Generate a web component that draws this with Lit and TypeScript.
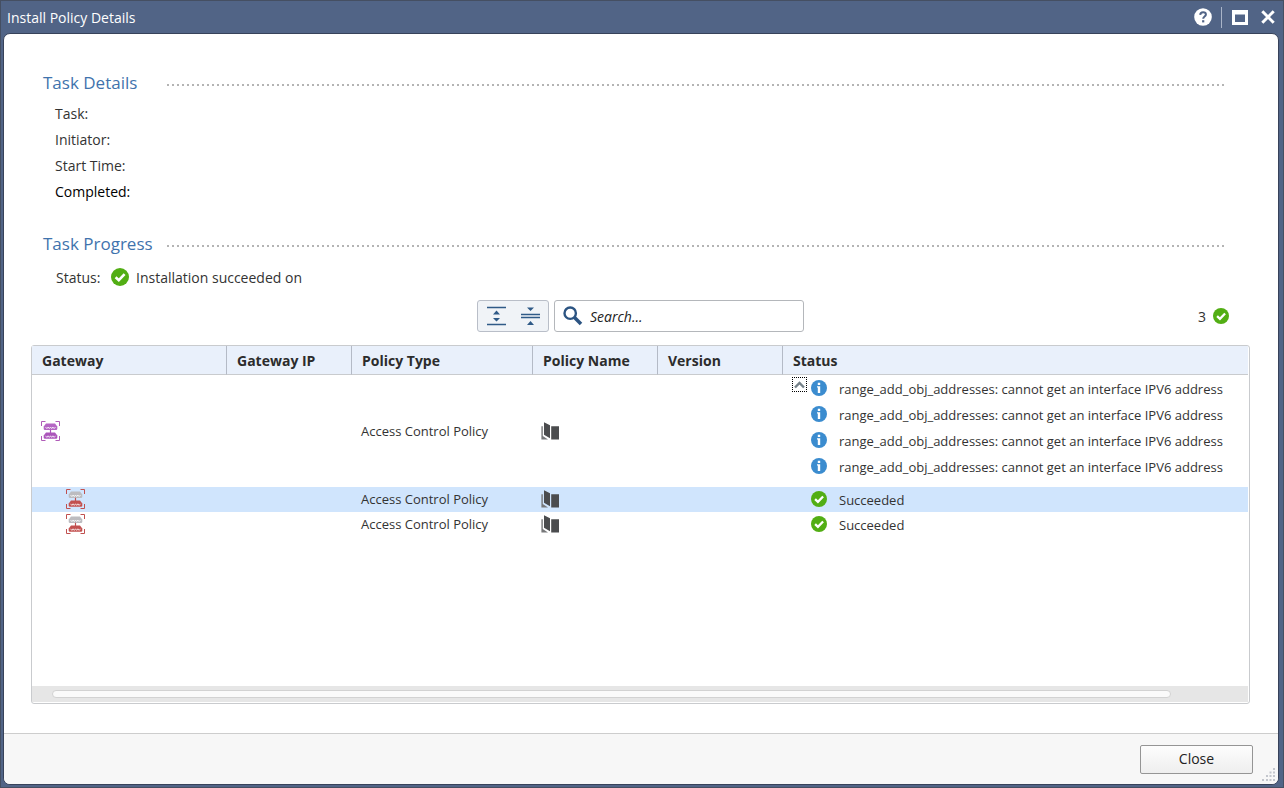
import { LitElement, html, svg, css, nothing } from "lit";
import { customElement, state } from "lit/decorators.js";

type Level = "info" | "ok";

interface PolicyRow {
  kind: "cluster" | "member";
  policyType: string;
  level: Level;
  messages: string[];
  selected?: boolean;
}

const IPV6_NOTE = "range_add_obj_addresses: cannot get an interface IPV6 address";

const ROWS: PolicyRow[] = [
  {
    kind: "cluster",
    policyType: "Access Control Policy",
    level: "info",
    messages: [IPV6_NOTE, IPV6_NOTE, IPV6_NOTE, IPV6_NOTE],
  },
  { kind: "member", policyType: "Access Control Policy", level: "ok", messages: ["Succeeded"], selected: true },
  { kind: "member", policyType: "Access Control Policy", level: "ok", messages: ["Succeeded"] },
];

const okIcon = (size: number) => html`
  <svg class="icon" width=${size} height=${size} viewBox="0 0 18 18" aria-hidden="true">
    <circle cx="9" cy="9" r="9" fill="#52ae14" />
    <path d="M4.6 9.2 7.8 12.2 13.6 6.2" fill="none" stroke="#fff" stroke-width="2.6" />
  </svg>
`;

const infoIcon = html`
  <svg class="icon" width="16" height="16" viewBox="0 0 16 16" aria-hidden="true">
    <circle cx="8" cy="8" r="8" fill="#3b8ccf" />
    <path d="M6.8 2.7h2.4v2.2H6.8zM6 6.3h3.2v6.8H6.8V7.6H6z" fill="#fff" />
  </svg>
`;

// One appliance of the cluster glyph: a tapered box with a zigzag of ports.
const device = (y: number, color: string) => svg`
  <path d=${`M5 ${y}H14L16.3 ${y + 3}V${y + 5.2}Q16.3 ${y + 6.4} 15 ${y + 6.4}H4Q2.7 ${y + 6.4} 2.7 ${y + 5.2}V${y + 3}Z`} fill=${color} />
  <path d=${`M4.5 ${y + 3.4}l1.4 1.6 1.2-1.6 1.2 1.6 1.2-1.6 1.2 1.6 1.2-1.6 1.2 1.6 1.4-1.6`} fill="none" stroke="#fff" stroke-width="0.8" />
`;

const gatewayIcon = (frame: string, top: string, bottom: string) => html`
  <svg class="icon" width="19" height="20" viewBox="0 0 19 20" aria-hidden="true">
    <path d="M.5 5V.5H4.5M14.500 .5H18.500V5M18.500 15V19.500H14.500M4.500 19.500H.5V15" fill="none" stroke=${frame} stroke-width="1" />
    ${device(2.6, top)}
    <path d="M9.5 8.800V12" stroke=${bottom} stroke-width="1.2" />
    ${device(11.4, bottom)}
  </svg>
`;

const policyIcon = html`
  <svg class="icon" width="18" height="18" viewBox="0 0 18 18" aria-hidden="true">
    <path d="M3 .3 9 3.3V16.2L3 12.8zM10.2 4.3H18V17.6h-7.800z" fill="#4b4c4e" />
    <path d="M.4 4.300H1.800V14L7 17.500H.4z" fill="#77787a" />
  </svg>
`;

@customElement("section-heading")
export class SectionHeading extends LitElement {
  static styles = css`
    :host {
      display: flex;
      align-items: center;
      height: 24px;
    }
    .title {
      flex: 0 0 124px;
      margin: 0;
      font-size: 17px;
      font-weight: 400;
      line-height: 24px;
      color: #3f73ad;
      white-space: nowrap;
    }
    .rule {
      flex: 1;
      height: 2px;
      margin-top: 4px;
      background: repeating-linear-gradient(to right, #b4b4b4 0 2px, transparent 2px 5px);
    }
  `;

  render() {
    return html`<h2 class="title"><slot></slot></h2>
      <div class="rule"></div>`;
  }
}

@customElement("app-root")
export class AppRoot extends LitElement {
  static styles = css`
    :host {
      display: block;
      height: 100vh;
      font-family: "Open Sans", "Noto Sans", sans-serif;
      font-size: 14px;
      color: #333;
    }
    * {
      box-sizing: border-box;
    }
    .icon {
      display: block;
      flex: none;
    }
    .window {
      display: flex;
      flex-direction: column;
      height: 100%;
      border: 1px solid #454f62;
      background: #516486;
      padding: 0 4px 2px 2px;
    }
    .titlebar {
      display: flex;
      align-items: center;
      flex: 0 0 32px;
      padding-left: 4px;
      color: #fff;
    }
    .caption {
      flex: 1;
      margin: 0;
      padding-top: 2px;
      font-size: 14px;
      font-weight: 400;
      line-height: 20px;
    }
    .tool {
      display: block;
      padding: 0;
      border: 0;
      background: none;
      color: inherit;
    }
    .separator {
      width: 1px;
      height: 21px;
      margin: 0 10px 0 9px;
      background: #a9b4c8;
    }
    .closer {
      margin: 0 4px 0 13px;
    }
    .panel {
      display: flex;
      flex: 1;
      flex-direction: column;
      min-height: 0;
      border: 1px solid #37425a;
      border-radius: 7px;
      background: #fff;
      overflow: hidden;
    }
    .body {
      display: flex;
      flex: 1;
      flex-direction: column;
      min-height: 0;
      padding: 37px 28px 29px 27px;
    }
    .heading {
      margin: 0 24px 0 12px;
    }
    .details {
      margin: 6px 0 27px 24px;
      line-height: 26px;
    }
    .details dt {
      height: 26px;
    }
    .done {
      color: #000;
    }
    .statusline {
      display: flex;
      align-items: center;
      height: 26px;
      margin: 8px 0 10px 25px;
    }
    .statuslabel {
      width: 55px;
    }
    .statusline .icon {
      margin-right: 7px;
    }
    .toolbar {
      display: grid;
      grid-template-columns: 1fr auto 1fr;
      align-items: center;
      margin-bottom: 13px;
    }
    .controls {
      display: flex;
      grid-column: 2;
      gap: 5px;
      height: 32px;
    }
    .group {
      display: flex;
      width: 72px;
      border: 1px solid #b9bec8;
      border-radius: 3px;
      background: #f0f3f7;
    }
    .group .tool {
      display: grid;
      flex: 1;
      place-items: center;
    }
    .search {
      display: flex;
      align-items: center;
      width: 250px;
      padding-left: 8px;
      border: 1px solid #b4b7bb;
      border-radius: 3px;
      background: #fff;
    }
    .field {
      flex: 1;
      min-width: 0;
      margin: 0 0 0 7px;
      padding: 0;
      border: 0;
      outline: 0;
      background: none;
      font: inherit;
      color: #222;
    }
    .field::placeholder {
      font-style: italic;
      color: #222;
      opacity: 1;
    }
    .tally {
      display: flex;
      align-items: center;
      justify-content: flex-end;
      gap: 7px;
      padding-right: 21px;
    }
    .gridbox {
      display: flex;
      flex: 1;
      flex-direction: column;
      min-height: 0;
      border: 1px solid #c9cbce;
      border-radius: 3px;
      padding: 0 1px 1px 0;
    }
    .scroller {
      flex: 1;
      min-height: 0;
      overflow: hidden;
    }
    .grid {
      width: 100%;
      border-collapse: separate;
      border-spacing: 0;
      table-layout: fixed;
      font-size: 13px;
    }
    .w-gateway {
      width: 195px;
    }
    .w-narrow {
      width: 125px;
    }
    .w-type {
      width: 181px;
    }
    .grid th {
      height: 29px;
      padding: 2px 9px 0 10px;
      border-bottom: 1px solid #c9cbce;
      border-right: 1px solid #b4bac6;
      background: #e9f0fb;
      font-size: 14px;
      font-weight: 700;
      line-height: 20px;
      text-align: left;
      color: #2c2c2c;
      white-space: nowrap;
    }
    .grid th:last-child {
      border-right: 0;
    }
    .grid td {
      height: 25px;
      padding: 0 0 0 9px;
      line-height: 22px;
      vertical-align: middle;
      white-space: nowrap;
    }
    .grid .member td {
      padding-bottom: 2px;
    }
    .grid .member .gateway {
      padding-left: 34px;
    }
    .grid .policy {
      padding-left: 8px;
    }
    .selected {
      background: #d0e5fd;
    }
    .outcome {
      display: flex;
      align-items: flex-start;
    }
    .toggleslot {
      flex: 0 0 19px;
    }
    .toggle {
      display: grid;
      place-items: center;
      width: 15px;
      height: 15px;
      margin-top: 2px;
      padding: 0;
      border: 1px dotted #000;
      background: none;
    }
    .messages {
      margin: 0;
      padding: 0;
      list-style: none;
    }
    .message {
      display: flex;
      gap: 12px;
      height: 23px;
      padding-top: 4px;
      line-height: 18px;
    }
    .cluster .messages {
      padding-bottom: 8px;
    }
    .cluster .message {
      height: 26px;
      padding-top: 5px;
    }
    .scrollbar {
      height: 16px;
      padding: 4px 77px 4px 20px;
      background: #e6e6e6;
    }
    .thumb {
      height: 8px;
      border: 1px solid #d2d2d2;
      border-radius: 4px;
      background: #fafafa;
    }
    .footer {
      display: flex;
      align-items: center;
      justify-content: flex-end;
      flex: 0 0 51px;
      position: relative;
      padding: 0 25px;
      border-top: 1px solid #cdcdcd;
      background: #f7f7f7;
    }
    .close {
      width: 113px;
      height: 29px;
      padding: 0;
      border: 1px solid #959595;
      border-radius: 2px;
      background: linear-gradient(#fdfdfd, #eeeeee);
      font: inherit;
      line-height: 20px;
      color: #222;
    }
    .grip {
      position: absolute;
      right: 3px;
      bottom: 3px;
    }
  `;

  @state() private expanded = true;

  private toggle() {
    this.expanded = !this.expanded;
  }

  private renderRow(row: PolicyRow) {
    const messages = this.expanded ? row.messages : row.messages.slice(0, 1);
    return html`
      <tr class="${row.kind} ${row.selected ? "selected" : ""}">
        <td class="gateway">
          ${row.kind === "cluster"
            ? gatewayIcon("#b05cb8", "#b565c4", "#ab55ba")
            : gatewayIcon("#c0504f", "#bcbcc0", "#c2504f")}
        </td>
        <td></td>
        <td>${row.policyType}</td>
        <td class="policy">${policyIcon}</td>
        <td></td>
        <td>
          <div class="outcome">
            <div class="toggleslot">
              ${row.messages.length > 1
                ? html`<button
                    class="toggle"
                    aria-label="Toggle messages"
                    aria-expanded=${this.expanded ? "true" : "false"}
                    @click=${this.toggle}
                  >
                    <svg class="icon" width="11" height="9" viewBox="0 0 11 9" aria-hidden="true">
                      <path d="M1 7.5 5.5 3 10 7.5" fill="none" stroke="#75828a" stroke-width="2.4" />
                    </svg>
                  </button>`
                : nothing}
            </div>
            <ul class="messages">
              ${messages.map(
                (text) => html`<li class="message">${row.level === "ok" ? okIcon(16) : infoIcon}<span>${text}</span></li>`
              )}
            </ul>
          </div>
        </td>
      </tr>
    `;
  }

  render() {
    return html`
      <div class="window" role="dialog" aria-labelledby="caption">
        <header class="titlebar">
          <h1 class="caption" id="caption">Install Policy Details</h1>
          <button class="tool" aria-label="Help">
            <svg class="icon" width="18" height="18" viewBox="0 0 18 18" aria-hidden="true">
              <circle cx="9" cy="9" r="8.8" fill="#fff" />
              <path d="M6.2 6.9C6.3 4.9 7.5 4.2 9.1 4.2c1.7 0 2.8.9 2.8 2.3 0 2-2.7 2-2.7 4.2" fill="none" stroke="#516486" stroke-width="2" />
              <path d="M8.1 12.2h2.2v2.2H8.1z" fill="#516486" />
            </svg>
          </button>
          <span class="separator"></span>
          <button class="tool" aria-label="Maximize">
            <svg class="icon" width="16" height="16" viewBox="0 0 16 16" aria-hidden="true">
              <path d="M0 1h16v15H0zM3 5.500V13h10V5.500z" fill="#fff" fill-rule="evenodd" />
            </svg>
          </button>
          <button class="tool closer" aria-label="Close window">
            <svg class="icon" width="14" height="14" viewBox="0 0 14 14" aria-hidden="true">
              <path d="M1.3 1.3 12.7 12.7M12.7 1.3 1.3 12.7" stroke="#fff" stroke-width="3" />
            </svg>
          </button>
        </header>

        <div class="panel">
          <main class="body">
            <section-heading class="heading">Task Details</section-heading>
            <dl class="details">
              <dt>Task:</dt>
              <dt>Initiator:</dt>
              <dt>Start Time:</dt>
              <dt class="done">Completed:</dt>
            </dl>

            <section-heading class="heading">Task Progress</section-heading>
            <div class="statusline">
              <span class="statuslabel">Status:</span>
              ${okIcon(18)}
              <span>Installation succeeded on</span>
            </div>

            <div class="toolbar">
              <div class="controls">
                <div class="group">
                  <button class="tool" aria-label="Expand all">
                    <svg class="icon" width="20" height="20" viewBox="0 0 20 20" aria-hidden="true">
                      <path d="M1 1.5h19M1 18.5h19" stroke="#2f5a87" stroke-width="1.6" />
                      <path d="M10.5 4.5 14 8.5H7zM10.5 15.5 14 12H7z" fill="#2f5a87" />
                    </svg>
                  </button>
                  <button class="tool" aria-label="Collapse all">
                    <svg class="icon" width="20" height="20" viewBox="0 0 20 20" aria-hidden="true">
                      <path d="M0 8.6h19M0 11.5h19" stroke="#2f5a87" stroke-width="1.5" />
                      <path d="M9.5 5 13 1.5H6zM9.5 15 13 19H6z" fill="#2f5a87" />
                    </svg>
                  </button>
                </div>
                <label class="search">
                  <svg class="icon" width="20" height="20" viewBox="0 0 20 20" aria-hidden="true">
                    <circle cx="7.2" cy="7.2" r="5.7" fill="none" stroke="#2c5482" stroke-width="2.4" />
                    <path d="M11 11 18 18" stroke="#2c5482" stroke-width="3.6" />
                  </svg>
                  <input class="field" type="text" placeholder="Search..." aria-label="Search" />
                </label>
              </div>
              <div class="tally"><span>3</span>${okIcon(16)}</div>
            </div>

            <div class="gridbox">
              <div class="scroller">
                <table class="grid">
                  <colgroup>
                    <col class="w-gateway" />
                    <col class="w-narrow" />
                    <col class="w-type" />
                    <col class="w-narrow" />
                    <col class="w-narrow" />
                    <col />
                  </colgroup>
                  <thead>
                    <tr>
                      <th>Gateway</th>
                      <th>Gateway IP</th>
                      <th>Policy Type</th>
                      <th>Policy Name</th>
                      <th>Version</th>
                      <th>Status</th>
                    </tr>
                  </thead>
                  <tbody>
                    ${ROWS.map((row) => this.renderRow(row))}
                  </tbody>
                </table>
              </div>
              <div class="scrollbar"><div class="thumb"></div></div>
            </div>
          </main>

          <footer class="footer">
            <button class="close">Close</button>
            <svg class="grip" width="13" height="13" viewBox="0 0 13 13" aria-hidden="true">
              <path
                d="M11 0h2v2h-2zM7.5 3.5h2v2h-2zM11 3.5h2v2h-2zM4 7h2v2H4zM7.5 7h2v2h-2zM11 7h2v2h-2zM0 11h2v2H0zM4 11h2v2H4zM7.5 11h2v2h-2zM11 11h2v2h-2z"
                fill="#c3c6cd"
              />
            </svg>
          </footer>
        </div>
      </div>
    `;
  }
}
